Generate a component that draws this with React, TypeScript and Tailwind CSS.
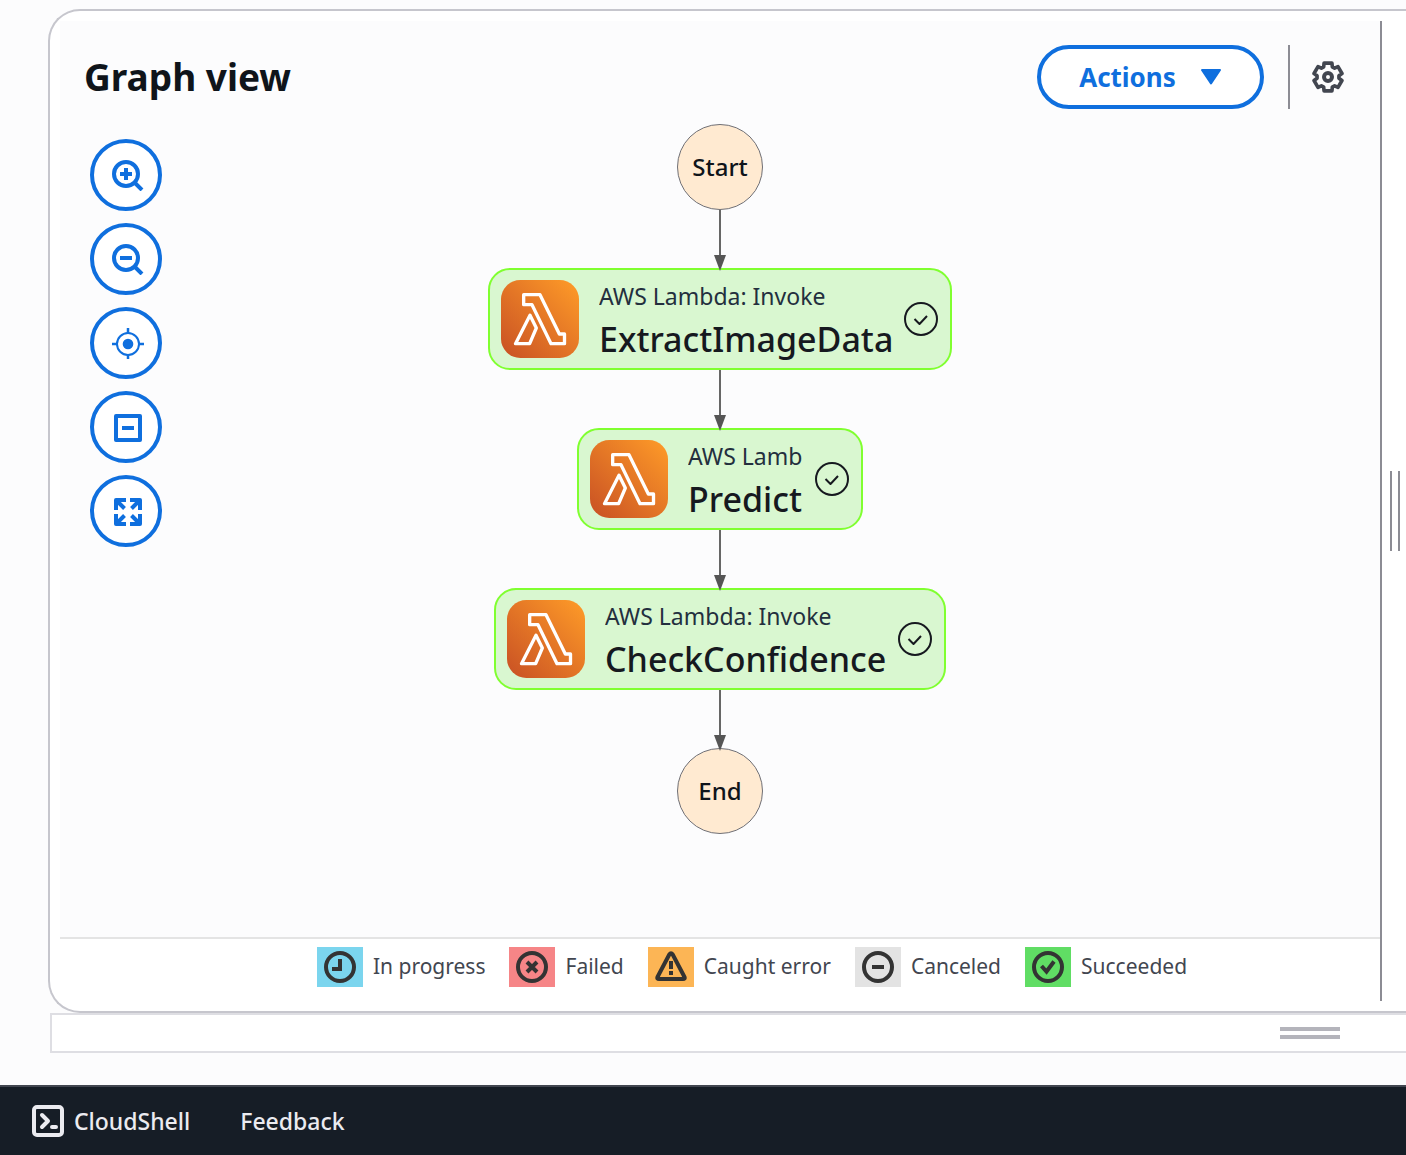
import type { ReactNode } from "react";

function ToolIcon({ children }: { children: ReactNode }) {
  return (
    <svg viewBox="0 0 32 32" className="ml-1 size-8" fill="none" stroke="currentColor" strokeWidth="4" aria-hidden="true">
      {children}
    </svg>
  );
}

const tools: { label: string; icon: ReactNode }[] = [
  {
    label: "Zoom in",
    icon: (
      <>
        <circle cx="14" cy="15" r="12" />
        <path d="M14 9v12M8 15h12M23 24l7 7" />
      </>
    ),
  },
  {
    label: "Zoom out",
    icon: (
      <>
        <circle cx="14" cy="15" r="12" />
        <path d="M8 15h12M23 24l7 7" />
      </>
    ),
  },
  {
    label: "Center graph",
    icon: (
      <>
        <circle cx="16" cy="17" r="11" strokeWidth="2" />
        <circle cx="16" cy="17" r="5.3" fill="currentColor" stroke="none" />
        <path d="M16 1v5M16 28v5M0 17h5M27 17h5" strokeWidth="2.5" />
      </>
    ),
  },
  {
    label: "Collapse",
    icon: (
      <>
        <rect x="4" y="5" width="24" height="24" strokeLinejoin="round" />
        <path d="M10 17h12" />
      </>
    ),
  },
  {
    label: "Fit to screen",
    icon: (
      <>
        <path d="M4 15V5h10M18 5h10v10M28 19v10H18M14 29H4V19" strokeLinejoin="round" />
        <path d="M5 6l7.500 7.500M27 6l-7.500 7.500M27 28l-7.500-7.500M5 28l7.500-7.500" />
      </>
    ),
  },
];

const gearPath =
  Array.from({ length: 6 }, (_, tooth) =>
    [
      [-16, 14.4],
      [16, 14.4],
      [23, 11],
      [37, 11],
    ].map(([offset, radius]) => {
      const angle = ((tooth * 60 + offset) * Math.PI) / 180;
      return `${(16 + radius * Math.sin(angle)).toFixed(2)} ${(16 - radius * Math.cos(angle)).toFixed(2)}`;
    }),
  )
    .flat()
    .reduce((path, point) => (path ? `${path}L${point}` : `M${point}`), "") + "Z";

function LambdaIcon({ id }: { id: string }) {
  return (
    <svg viewBox="0 0 234 234" className="size-[78px] shrink-0" aria-hidden="true">
      <defs>
        <linearGradient id={id} x1="0" y1="1" x2="1" y2="0">
          <stop offset="0" stopColor="#c85024" />
          <stop offset="1" stopColor="#ff9c28" />
        </linearGradient>
      </defs>
      <rect width="234" height="234" rx="58" fill={`url(#${id})`} />
      <g fill="none" stroke="#fff" strokeWidth="10" strokeLinejoin="round">
        <path d="M68 44H117L175 162H190.500V191H150L93 74H68Z" />
        <path d="M87 106L106 144L86 191H43.500Z" />
      </g>
    </svg>
  );
}

function Edge() {
  return (
    <svg viewBox="0 0 12 62" className="relative z-10 -mb-1 h-[62px] w-3" aria-hidden="true">
      <path d="M6 0V48" stroke="#666" strokeWidth="2" />
      <path d="M0 45H12L6 61Z" fill="#555" />
    </svg>
  );
}

function Terminal({ children }: { children: ReactNode }) {
  return (
    <div className="flex size-[86px] items-center justify-center rounded-full border border-[#6f6f75] bg-[#ffead1] text-2xl font-medium text-[#0f141a]">
      {children}
    </div>
  );
}

function StateNode({ id, name, width }: { id: string; name: string; width: string }) {
  return (
    <div className="flex h-[102px] items-center rounded-[22px] border-2 border-[#80ff30] bg-[#d9f7d0] pr-3 pl-[11px]">
      <LambdaIcon id={id} />
      <div className={`ml-5 pt-2 ${width} whitespace-nowrap`}>
        <div className="overflow-hidden text-[23px] leading-8 text-[#232f3e]">AWS Lambda: Invoke</div>
        <div className="text-[34px] leading-[54px] font-medium text-[#16191f]">{name}</div>
      </div>
      <svg viewBox="0 0 34 34" className="ml-3 size-[34px] shrink-0" fill="none" stroke="#16191f" strokeWidth="2" role="img" aria-label="Succeeded">
        <circle cx="17" cy="17" r="16" />
        <path d="M10.500 17l5 5L23 14" strokeLinejoin="round" />
      </svg>
    </div>
  );
}

const ring = <circle cx="16" cy="16" r="14" />;

const legend: { label: string; color: string; icon: ReactNode }[] = [
  { label: "In progress", color: "bg-[#7bd5ee]", icon: <>{ring}<path d="M16 8v10H8" /></> },
  { label: "Failed", color: "bg-[#f68587]", icon: <>{ring}<path d="M11 11l10 10M21 11L11 21" /></> },
  {
    label: "Caught error",
    color: "bg-[#fcb555]",
    icon: (
      <>
        <path d="M14.300 3.500Q16 1.200 17.700 3.500L29.500 26Q30.300 28 28 28H4Q1.700 28 2.500 26Z" strokeLinejoin="round" />
        <path d="M16 10v8M16 20v4" />
      </>
    ),
  },
  { label: "Canceled", color: "bg-[#e3e3e3]", icon: <>{ring}<path d="M10 16h12" /></> },
  { label: "Succeeded", color: "bg-[#60dd64]", icon: <>{ring}<path d="M9.500 15l5 5.500L22 10.500" /></> },
];

export default function App() {
  return (
    <div className="flex min-h-screen flex-col overflow-hidden bg-[#fcfcfd] font-['Noto_Sans',sans-serif]">
      <main className="flex flex-1 flex-col pt-[9px] pb-8 pl-12">
        <section className="flex flex-1 rounded-l-[32px] border-2 border-r-0 border-[#c6c6cd] bg-white py-2.5 pl-2.5">
          <div className="flex flex-1 flex-col border-r-2 border-[#8c8c94]">
            <div className="flex flex-1 flex-col border-b-2 border-[#e4e4e4] bg-[#fcfcfd]">
              <header className="flex items-center pt-6 pr-9 pl-6">
                <h1 className="flex-1 text-[37px] leading-[64px] font-bold text-[#0f141a]">Graph view</h1>
                <button className="flex h-16 w-[227px] items-center justify-center gap-6 rounded-full border-4 border-[#0f6fde] bg-white text-[26px] font-bold text-[#0f6fde]">
                  Actions
                  <svg viewBox="0 0 22 18" className="h-[18px] w-[22px]" fill="currentColor" stroke="currentColor" strokeWidth="2" strokeLinejoin="round" aria-hidden="true">
                    <path d="M2 2H20L11 15.500Z" />
                  </svg>
                </button>
                <div className="ml-6 h-16 w-0.5 bg-[#8c8c94]" />
                <button aria-label="Preferences" className="ml-[22px] text-[#424650]">
                  <svg viewBox="0 0 32 32" className="size-8" fill="none" stroke="currentColor" strokeWidth="4" strokeLinejoin="round" aria-hidden="true">
                    <path d={gearPath} strokeWidth="3.600" />
                    <circle cx="16" cy="16" r="4" />
                  </svg>
                </button>
              </header>

              <div className="grid flex-1 grid-cols-[1fr_auto_1fr]">
                <div className="flex flex-col gap-3 pt-[30px] pl-[30px]">
                  {tools.map((tool) => (
                    <button
                      key={tool.label}
                      aria-label={tool.label}
                      className="flex size-[72px] items-center justify-center rounded-full border-4 border-[#0f6fde] bg-white text-[#0f6fde]"
                    >
                      <ToolIcon>{tool.icon}</ToolIcon>
                    </button>
                  ))}
                </div>
                <div className="flex flex-col items-center pt-[15px]">
                  <Terminal>Start</Terminal>
                  <Edge />
                  <StateNode id="lambda-extract" name="ExtractImageData" width="w-[293px]" />
                  <Edge />
                  <StateNode id="lambda-predict" name="Predict" width="w-[115px]" />
                  <Edge />
                  <StateNode id="lambda-check" name="CheckConfidence" width="w-[281px]" />
                  <Edge />
                  <Terminal>End</Terminal>
                </div>
              </div>
            </div>

            <ul className="flex justify-center gap-6 pt-2 pb-3.5 pl-16 text-[21px] text-[#424650]">
              {legend.map((item) => (
                <li key={item.label} className="flex h-10 items-center gap-2.5">
                  <span className={`flex h-10 w-[46px] items-center justify-center ${item.color}`}>
                    <svg viewBox="0 0 32 32" className="size-8" fill="none" stroke="#333" strokeWidth="4" aria-hidden="true">
                      {item.icon}
                    </svg>
                  </span>
                  {item.label}
                </li>
              ))}
            </ul>
          </div>
          <div className="flex w-6 items-center justify-end gap-1.5 pr-1.5">
            <div className="h-20 w-0.5 bg-[#8c8c94]" />
            <div className="h-20 w-0.5 bg-[#8c8c94]" />
          </div>
        </section>

        <div className="ml-0.5 flex h-10 flex-col items-end justify-center gap-1 border-2 border-r-0 border-[#dedee3] bg-white pr-[66px]">
          <div className="h-1 w-[60px] bg-[#b4b4bb]" />
          <div className="h-1 w-[60px] bg-[#b4b4bb]" />
        </div>
      </main>

      <footer className="flex h-[70px] items-center gap-[50px] border-t-2 border-[#424650] bg-[#161d26] px-8 text-[23px] font-medium text-[#ebebf0]">
        <button className="flex items-center gap-2.5">
          <svg viewBox="0 0 32 32" className="size-8" fill="none" stroke="currentColor" strokeWidth="4" strokeLinecap="round" strokeLinejoin="round" aria-hidden="true">
            <rect x="2" y="2" width="28" height="28" rx="3" />
            <path d="M10 10l6 6-6 6M20 22h4" />
          </svg>
          CloudShell
        </button>
        <a href="#feedback">Feedback</a>
      </footer>
    </div>
  );
}
